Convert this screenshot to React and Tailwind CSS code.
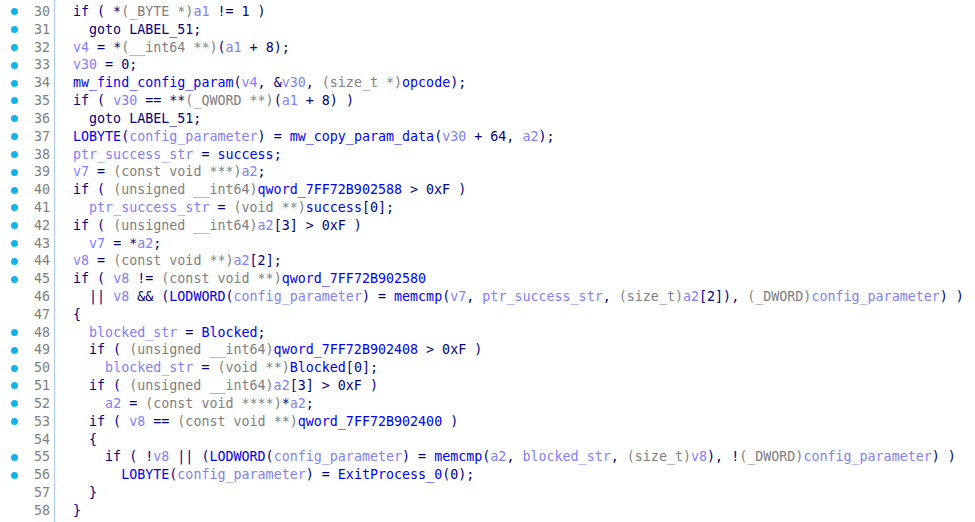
import React from "react";

const K = (t) => ["k", t];
const F = (t) => ["f", t];
const V = (t) => ["v", t];
const C = (t) => ["c", t];

const cls = {
  k: "text-[#000080]",
  f: "text-[#0000ff]",
  v: "text-[#8080ff]",
  c: "text-[#808080]",
};

const lines = [
  [30, true, [K("if ( *"), C("(_BYTE *)"), V("a1"), K(" != 1 )")]],
  [31, true, [K("  goto LABEL_51;")]],
  [32, true, [V("v4"), K(" = *"), C("(__int64 **)"), K("("), V("a1"), K(" + 8);")]],
  [33, true, [V("v30"), K(" = 0;")]],
  [34, true, [F("mw_find_config_param"), K("("), V("v4"), K(", &"), V("v30"), K(", "), C("(size_t *)"), F("opcode"), K(");")]],
  [35, true, [K("if ( "), V("v30"), K(" == **"), C("(_QWORD **)"), K("("), V("a1"), K(" + 8) )")]],
  [36, true, [K("  goto LABEL_51;")]],
  [37, true, [F("LOBYTE"), K("("), V("config_parameter"), K(") = "), F("mw_copy_param_data"), K("("), V("v30"), K(" + 64, "), V("a2"), K(");")]],
  [38, true, [V("ptr_success_str"), K(" = "), F("success"), K(";")]],
  [39, true, [V("v7"), K(" = "), C("(const void ***)"), V("a2"), K(";")]],
  [40, true, [K("if ( "), C("(unsigned __int64)"), F("qword_7FF72B902588"), K(" > 0xF )")]],
  [41, true, [K("  "), V("ptr_success_str"), K(" = "), C("(void **)"), F("success"), K("[0];")]],
  [42, true, [K("if ( "), C("(unsigned __int64)"), V("a2"), K("[3] > 0xF )")]],
  [43, true, [K("  "), V("v7"), K(" = *"), V("a2"), K(";")]],
  [44, true, [V("v8"), K(" = "), C("(const void **)"), V("a2"), K("[2];")]],
  [45, true, [K("if ( "), V("v8"), K(" != "), C("(const void **)"), F("qword_7FF72B902580")]],
  [46, false, [K("  || "), V("v8"), K(" && ("), F("LODWORD"), K("("), V("config_parameter"), K(") = "), F("memcmp"), K("("), V("v7"), K(", "), V("ptr_success_str"), K(", "), C("(size_t)"), V("a2"), K("[2]), "), C("(_DWORD)"), V("config_parameter"), K(") )")]],
  [47, false, [K("{")]],
  [48, true, [K("  "), V("blocked_str"), K(" = "), F("Blocked"), K(";")]],
  [49, true, [K("  if ( "), C("(unsigned __int64)"), F("qword_7FF72B902408"), K(" > 0xF )")]],
  [50, true, [K("    "), V("blocked_str"), K(" = "), C("(void **)"), F("Blocked"), K("[0];")]],
  [51, true, [K("  if ( "), C("(unsigned __int64)"), V("a2"), K("[3] > 0xF )")]],
  [52, true, [K("    "), V("a2"), K(" = "), C("(const void ****)"), K("*"), V("a2"), K(";")]],
  [53, true, [K("  if ( "), V("v8"), K(" == "), C("(const void **)"), F("qword_7FF72B902400"), K(" )")]],
  [54, false, [K("  {")]],
  [55, true, [K("    if ( !"), V("v8"), K(" || ("), F("LODWORD"), K("("), V("config_parameter"), K(") = "), F("memcmp"), K("("), V("a2"), K(", "), V("blocked_str"), K(", "), C("(size_t)"), V("v8"), K("), !"), C("(_DWORD)"), V("config_parameter"), K(") )")]],
  [56, true, [K("      "), F("LOBYTE"), K("("), V("config_parameter"), K(") = "), F("ExitProcess_0"), K("(0);")]],
  [57, false, [K("  }")]],
  [58, false, [K("}")]],
];

export default function App() {
  return (
    <div
      className="w-[975px] h-[522px] bg-white overflow-hidden flex text-[13.33px] leading-[17.82px]"
      style={{ fontFamily: '"DejaVu Sans Mono", "Liberation Mono", monospace' }}
    >
      <div className="w-[55px] shrink-0 border-r border-[#a8cbef] pt-[3px]">
        {lines.map(([n, dot]) => (
          <div key={n} className="h-[17.82px] flex items-center">
            <div className="w-[28px] flex justify-center">
              {dot ? <div className="w-[7px] h-[7px] rounded-full bg-[#12b4ea]" /> : null}
            </div>
            <div className="w-[22px] text-right text-[#808080]">{n}</div>
          </div>
        ))}
      </div>
      <div className="pl-[18px] pt-[3px] whitespace-pre">
        {lines.map(([n, , segs]) => (
          <div key={n} className="h-[17.82px]">
            {segs.map(([c, t], i) => (
              <span key={i} className={cls[c]}>
                {t}
              </span>
            ))}
          </div>
        ))}
      </div>
    </div>
  );
}
